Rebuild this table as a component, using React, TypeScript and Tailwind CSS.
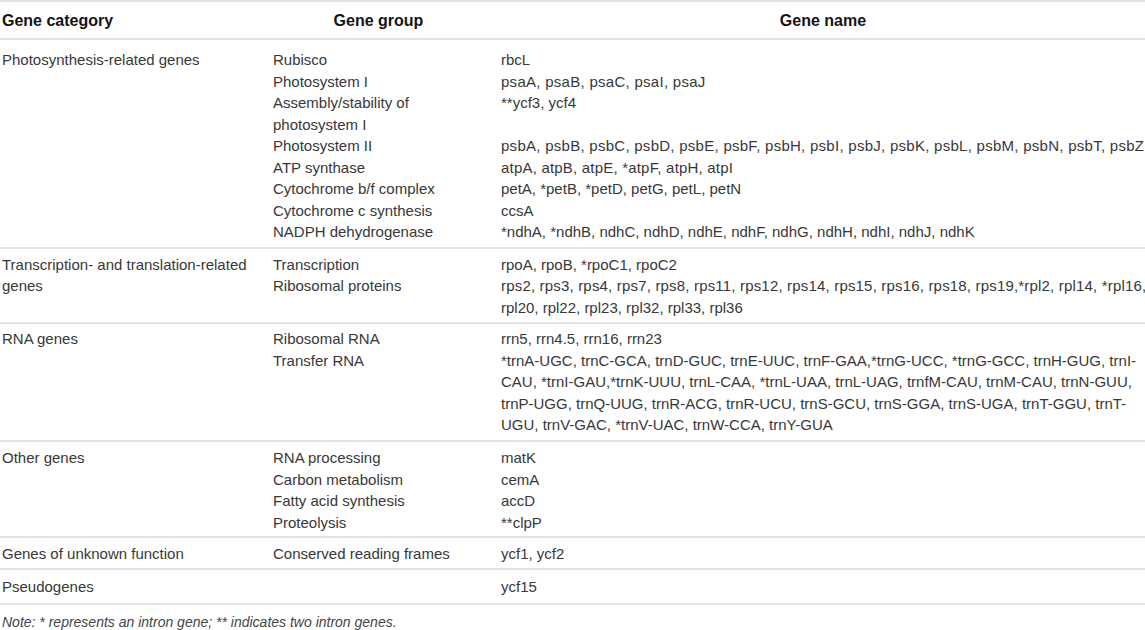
import React from "react";

type Line = { t: string; c?: string };

type Row = {
  cat: Line[];
  groups: Line[];
  names: Line[];
  pad: string;
};

const L = (t: string, c?: string): Line => ({ t, c });

const rows: Row[] = [
  {
    cat: [L("Photosynthesis-related genes")],
    groups: [
      L("Rubisco"),
      L("Photosystem I"),
      L("Assembly/stability of"),
      L("photosystem I"),
      L("Photosystem II"),
      L("ATP synthase"),
      L("Cytochrome b/f complex"),
      L("Cytochrome c synthesis"),
      L("NADPH dehydrogenase"),
    ],
    names: [
      L("rbcL"),
      L("psaA, psaB, psaC, psaI, psaJ", "tracking-[0.28px]"),
      L("**ycf3, ycf4"),
      L(""),
      L(
        "psbA, psbB, psbC, psbD, psbE, psbF, psbH, psbI, psbJ, psbK, psbL, psbM, psbN, psbT, psbZ",
        "tracking-[0.27px]"
      ),
      L("atpA, atpB, atpE, *atpF, atpH, atpI", "tracking-[0.2px]"),
      L("petA, *petB, *petD, petG, petL, petN"),
      L("ccsA"),
      L("*ndhA, *ndhB, ndhC, ndhD, ndhE, ndhF, ndhG, ndhH, ndhI, ndhJ, ndhK"),
    ],
    pad: "pt-[9px] pb-[4px]",
  },
  {
    cat: [L("Transcription- and translation-related"), L("genes")],
    groups: [L("Transcription"), L("Ribosomal proteins")],
    names: [
      L("rpoA, rpoB, *rpoC1, rpoC2"),
      L(
        "rps2, rps3, rps4, rps7, rps8, rps11, rps12, rps14, rps15, rps16, rps18, rps19,*rpl2, rpl14, *rpl16,",
        "tracking-[0.18px]"
      ),
      L("rpl20, rpl22, rpl23, rpl32, rpl33, rpl36"),
    ],
    pad: "pt-[5px] pb-[4px]",
  },
  {
    cat: [L("RNA genes")],
    groups: [L("Ribosomal RNA"), L("Transfer RNA")],
    names: [
      L("rrn5, rrn4.5, rrn16, rrn23"),
      L(
        "*trnA-UGC, trnC-GCA, trnD-GUC, trnE-UUC, trnF-GAA,*trnG-UCC, *trnG-GCC, trnH-GUG, trnI-"
      ),
      L(
        "CAU, *trnI-GAU,*trnK-UUU, trnL-CAA, *trnL-UAA, trnL-UAG, trnfM-CAU, trnM-CAU, trnN-GUU,"
      ),
      L(
        "trnP-UGG, trnQ-UUG, trnR-ACG, trnR-UCU, trnS-GCU, trnS-GGA, trnS-UGA, trnT-GGU, trnT-"
      ),
      L("UGU, trnV-GAC, *trnV-UAC, trnW-CCA, trnY-GUA"),
    ],
    pad: "pt-[4px] pb-[4px]",
  },
  {
    cat: [L("Other genes")],
    groups: [
      L("RNA processing"),
      L("Carbon metabolism"),
      L("Fatty acid synthesis"),
      L("Proteolysis"),
    ],
    names: [L("matK"), L("cemA"), L("accD"), L("**clpP")],
    pad: "pt-[5.5px] pb-[3px]",
  },
  {
    cat: [L("Genes of unknown function")],
    groups: [L("Conserved reading frames")],
    names: [L("ycf1, ycf2")],
    pad: "pt-[4.5px] pb-[4px]",
  },
  {
    cat: [L("Pseudogenes")],
    groups: [L("")],
    names: [L("ycf15")],
    pad: "pt-[5.5px] pb-[6px]",
  },
];

function Lines({ items }: { items: Line[] }) {
  return (
    <div className="flex flex-col">
      {items.map((l, i) => (
        <div key={i} className={"h-[21.5px] whitespace-nowrap " + (l.c ?? "")}>
          {l.t === "" ? "\u00a0" : l.t}
        </div>
      ))}
    </div>
  );
}

export default function App() {
  return (
    <div className="w-[1145px] h-[630px] overflow-hidden bg-white font-['Liberation_Sans',Arial,Helvetica,sans-serif] text-[15px] leading-[21.5px] text-[#383838]">
      <div className="border-t-2 border-[#e3e3e3]">
        <div className="grid grid-cols-[271px_228px_1fr] border-b-2 border-[#e3e3e3] pt-[7.5px] pb-[7px] text-[16px] font-bold text-[#141414]">
          <div className="pl-[2px]">Gene category</div>
          <div className="pl-[2px] pr-[15px] text-center">Gene group</div>
          <div className="pl-[2px] text-center">Gene name</div>
        </div>
        {rows.map((r, i) => (
          <div
            key={i}
            className={
              "grid grid-cols-[271px_228px_1fr] border-b-2 border-[#e3e3e3] " +
              r.pad
            }
          >
            <div className="pl-[2px]">
              <Lines items={r.cat} />
            </div>
            <div className="pl-[2px]">
              <Lines items={r.groups} />
            </div>
            <div className="pl-[2px]">
              <Lines items={r.names} />
            </div>
          </div>
        ))}
        <div className="pt-[6.5px] pl-[2px] text-[14px] italic text-[#454545]">
          Note: * represents an intron gene; ** indicates two intron genes.
        </div>
      </div>
    </div>
  );
}
